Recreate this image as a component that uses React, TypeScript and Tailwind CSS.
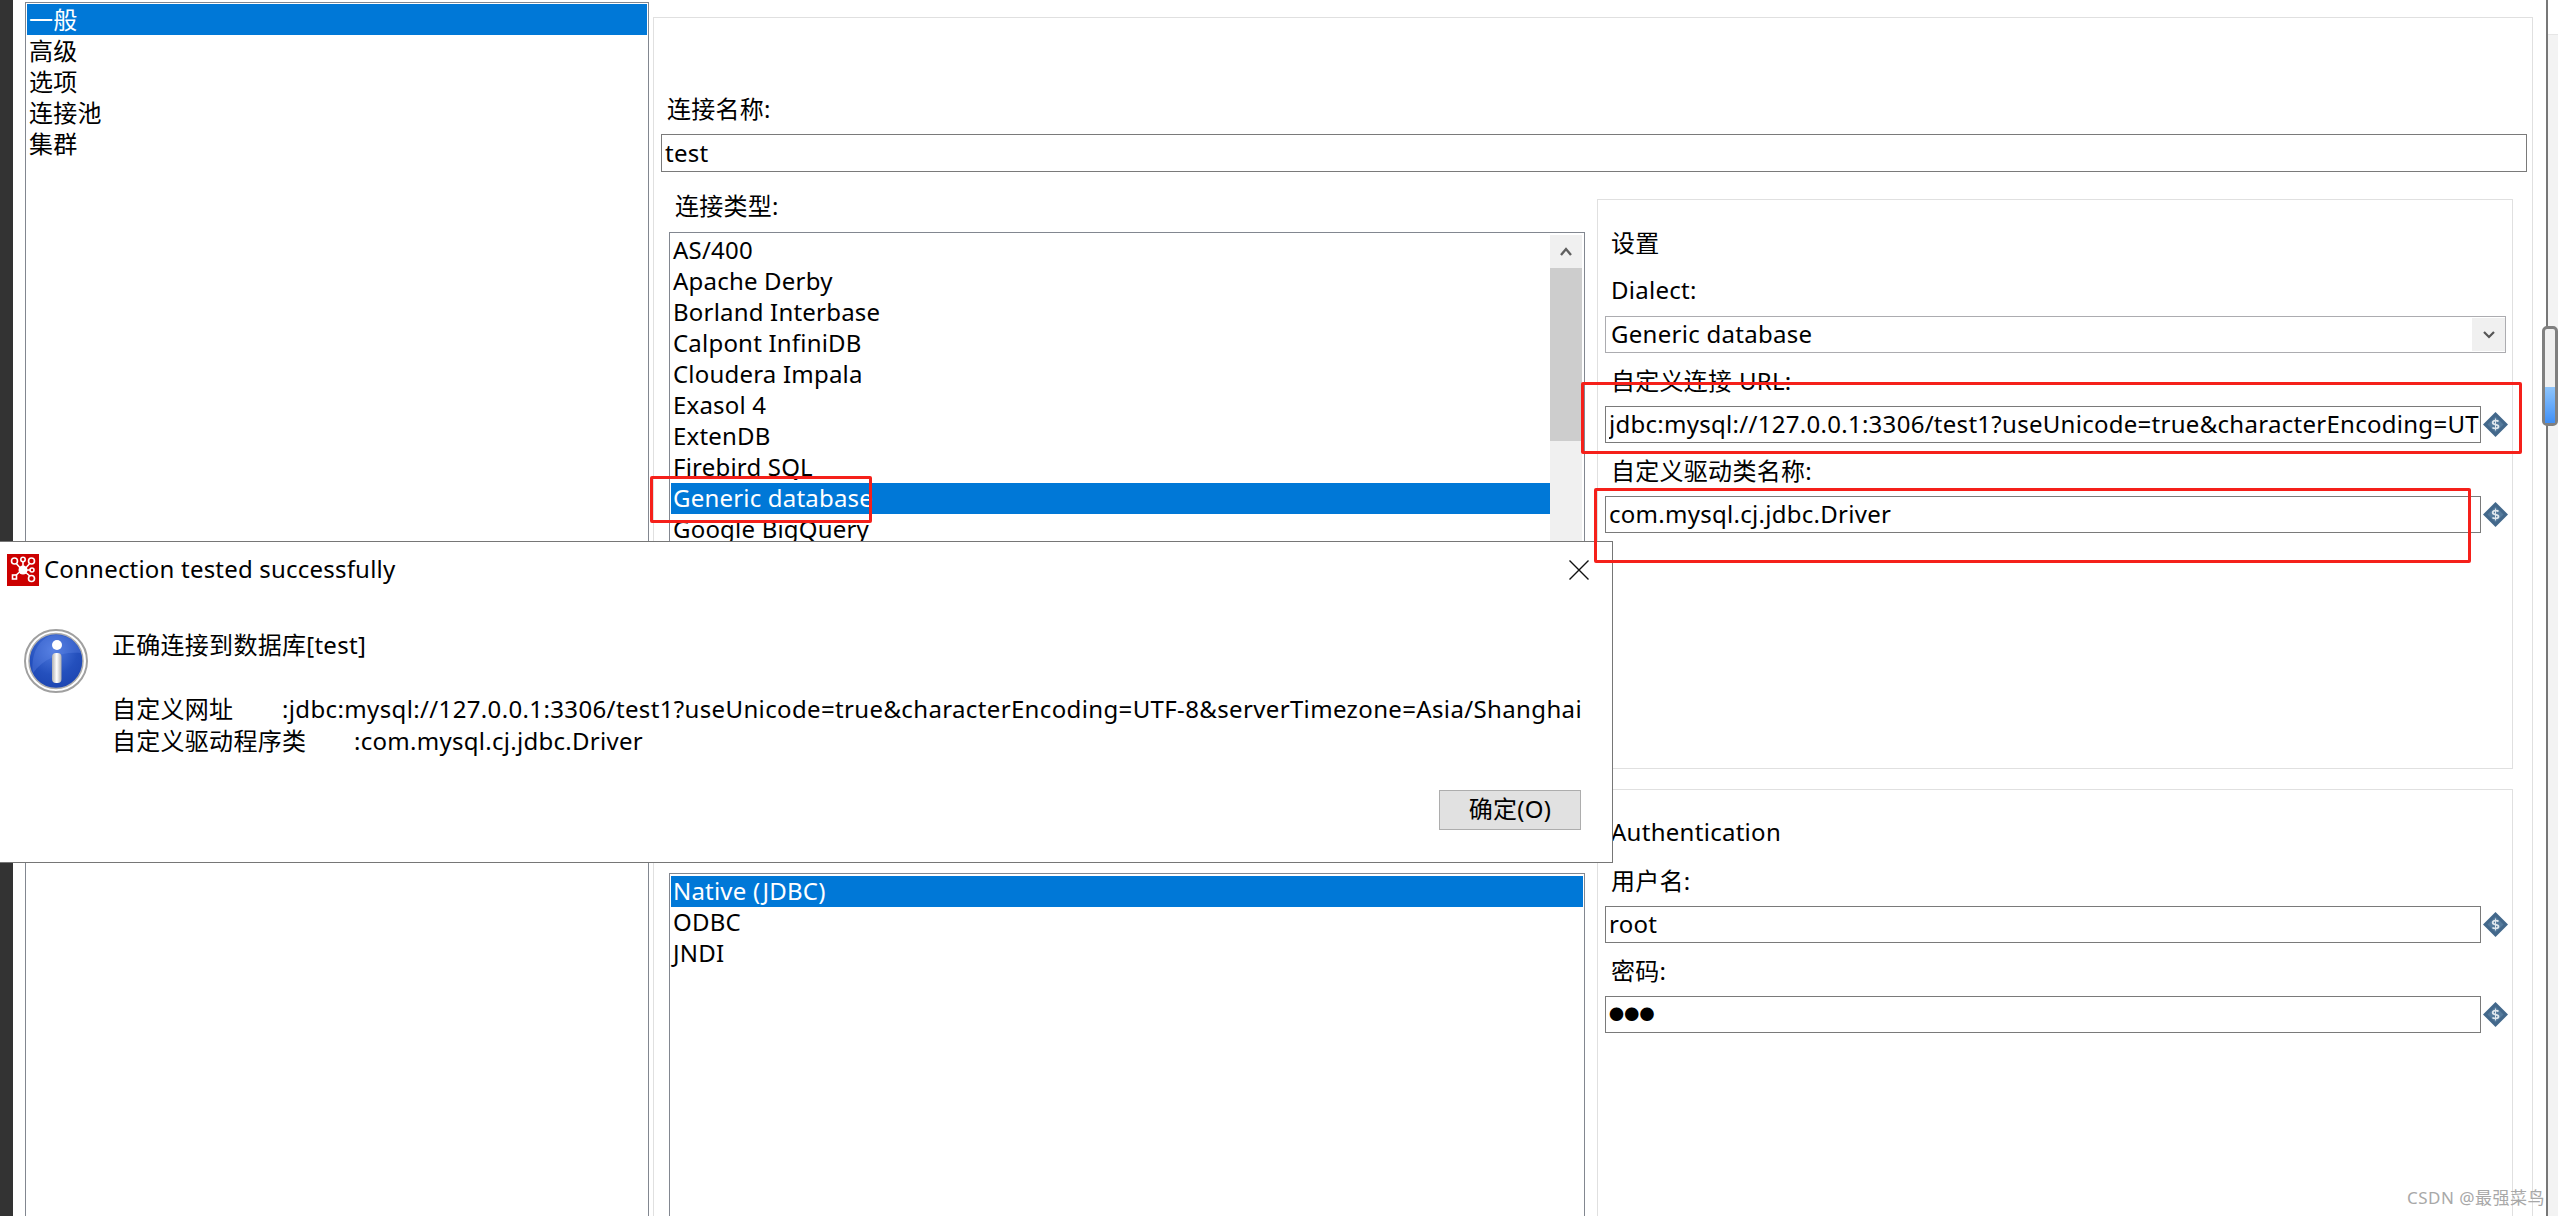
import React from 'react';

const DRIVERS = [
  'AS/400',
  'Apache Derby',
  'Borland Interbase',
  'Calpont InfiniDB',
  'Cloudera Impala',
  'Exasol 4',
  'ExtenDB',
  'Firebird SQL',
  'Generic database',
  'Google BigQuery',
];

const VarIcon: React.FC = () => (
  <svg viewBox="0 0 25 25" className="ml-[2px] h-[25px] w-[25px] shrink-0">
    <path d="M12.5 0 25 12.5 12.5 25 0 12.5Z" fill="#43688b" />
    <path d="M12.5 4.5 20.5 12.5 12.5 20.5 4.5 12.5Z" fill="#557a9c" />
    <path d="M15.5 9.5c-1-1.2-5.8-1.4-5.8 1.2 0 2.6 5.8 1.2 5.8 3.8 0 2.5-5 2.2-6 1" fill="none" stroke="#dfe7ee" strokeWidth="1.8" />
    <path d="M12.5 6.5v12" stroke="#dfe7ee" strokeWidth="1" />
  </svg>
);

const Field: React.FC<{ value: string; label: string; first?: boolean; dots?: boolean }> = ({ value, label, first, dots }) => (
  <>
    <div className={`${first ? 'mt-[18px]' : 'mt-[13px]'} h-[31px] pl-[13px] leading-[29px]`}>{label}</div>
    <div className="ml-[7px] mt-[9px] flex items-center">
      <input
        readOnly
        value={value}
        className={`h-[37px] w-[876px] shrink-0 border border-[#7a7a7a] bg-white pb-[2px] pl-[3px] text-black outline-none ${dots ? 'text-[15px]' : 'text-[24px]'}`}
      />
      <VarIcon />
    </div>
  </>
);

const ListRow: React.FC<{ text: string; selected?: boolean; tree?: boolean }> = ({ text, selected, tree }) => (
  <div
    className={`h-[31px] whitespace-nowrap pl-[2px] ${tree ? 'leading-[31px]' : 'leading-[30px] tracking-[0.2px]'} ${
      selected ? 'bg-[#0078d7] text-white' : 'text-black'
    }`}
  >
    {text}
  </div>
);

const InfoIcon: React.FC = () => (
  <svg viewBox="0 0 64 64" className="h-[64px] w-[64px] shrink-0">
    <defs>
      <radialGradient id="disc" cx="45%" cy="30%" r="75%">
        <stop offset="0" stopColor="#4f7be0" />
        <stop offset="0.6" stopColor="#2450bd" />
        <stop offset="1" stopColor="#1c44b0" />
      </radialGradient>
      <linearGradient id="stem" x1="0" x2="1" y1="0" y2="0">
        <stop offset="0" stopColor="#b0b0b0" />
        <stop offset="0.5" stopColor="#ffffff" />
        <stop offset="1" stopColor="#b0b0b0" />
      </linearGradient>
    </defs>
    <ellipse cx="32" cy="32" rx="31" ry="31" fill="#fff" stroke="#a0a0a0" strokeWidth="2" />
    <ellipse cx="32" cy="32" rx="27" ry="27.5" fill="url(#disc)" stroke="#adadad" strokeWidth="1.5" />
    <path d="M9 44C20 28 40 22 57 24 53 12 43 6 32 6 18 6 6 22 9 44Z" fill="#6a90ea" opacity="0.3" />
    <circle cx="33" cy="16" r="5" fill="#fff" />
    <rect x="28" y="24" width="9.5" height="30" rx="4" fill="url(#stem)" />
  </svg>
);

const AppIcon: React.FC = () => (
  <svg viewBox="0 0 32 32" className="h-[32px] w-[32px] shrink-0">
    <rect width="32" height="32" fill="#cc0000" />
    <g stroke="#fff" strokeWidth="1.6" fill="none">
      <path d="M15 16 8 8M16 16V7M17 16l7-8M17 16h6M15 16 8 22M17 17l7 6" />
      <circle cx="7.5" cy="7" r="3" fill="#cc0000" />
      <circle cx="16" cy="5.5" r="2.2" fill="#cc0000" />
      <circle cx="24.5" cy="7" r="3" fill="#cc0000" />
      <circle cx="25" cy="16" r="2" fill="#cc0000" />
      <rect x="5.5" y="21" width="4" height="4" fill="#cc0000" />
      <circle cx="24.5" cy="24.5" r="3" fill="#cc0000" />
    </g>
    <circle cx="16" cy="16" r="4.5" fill="#fff" />
  </svg>
);

const App: React.FC = () => {
  return (
    <div className='relative flex h-[1216px] w-[2558px] overflow-hidden bg-white text-[24px] tracking-[0.28px] text-black [font-family:"Noto_Sans","Noto_Sans_CJK_SC",sans-serif]'>
      {/* window edge on the left */}
      <div className="w-[13px] shrink-0 bg-[#333333]" />

      {/* page tree */}
      <div className="ml-[12px] mt-[2px] h-[1300px] w-[624px] shrink-0 border border-[#828790] p-[1px]">
        <ListRow tree text="一般" selected />
        <ListRow tree text="高级" />
        <ListRow tree text="选项" />
        <ListRow tree text="连接池" />
        <ListRow tree text="集群" />
      </div>

      {/* general page */}
      <div className="ml-[4px] mt-[17px] h-[1300px] w-[1880px] shrink-0 border border-[#e0e0e0]">
        <div className="mt-[76px] h-[31px] pl-[13px] leading-[29px]">连接名称:</div>
        <input
          readOnly
          value="test"
          className="ml-[7px] mt-[9px] block h-[38px] w-[1866px] border border-[#7a7a7a] pb-[2px] pl-[3px] text-[24px] outline-none"
        />

        <div className="mt-[19px] flex">
          <div className="ml-[15px] w-[916px] shrink-0">
            <div className="h-[31px] pl-[6px] leading-[29px]">连接类型:</div>
            <div className="mt-[10px] flex h-[621px] overflow-hidden border border-[#828790] p-[1px] pr-[2px] pt-[2px]">
              <div className="min-w-0 flex-1">
                {DRIVERS.map((d) => (
                  <ListRow key={d} text={d} selected={d === 'Generic database'} />
                ))}
              </div>
              <div className="flex w-[32px] shrink-0 flex-col bg-[#f0f0f0]">
                <div className="flex h-[33px] shrink-0 items-center justify-center">
                  <svg viewBox="0 0 12 9" className="h-[9px] w-[12px]">
                    <path d="M1 8l5-6 5 6" fill="none" stroke="#606060" strokeWidth="2.4" />
                  </svg>
                </div>
                <div className="h-[173px] shrink-0 bg-[#cdcdcd]" />
              </div>
            </div>
            <div className="mt-[20px] h-[400px] border border-[#828790] p-[1px] pt-[2px]">
              <ListRow text="Native (JDBC)" selected />
              <ListRow text="ODBC" />
              <ListRow text="JNDI" />
            </div>
          </div>

          <div className="ml-[12px] mt-[8px] w-[916px] shrink-0">
            <div className="h-[570px] border border-[#e0e0e0]">
              <div className="mt-[28px] h-[31px] pl-[13px] leading-[29px]">设置</div>
              <div className="mt-[16px] h-[31px] pl-[13px] leading-[29px]">Dialect:</div>
              <div className="ml-[7px] mt-[10px] flex h-[37px] w-[901px] items-center border border-[#acacb0] pl-[3px]">
                <span className="-mt-[2px] flex-1 pl-[2px]">Generic database</span>
                <span className="flex h-[33px] w-[33px] items-center justify-center bg-[#f0f0f0]">
                  <svg viewBox="0 0 12 8" className="h-[8px] w-[12px]">
                    <path d="M1 1l5 5 5-5" fill="none" stroke="#555555" strokeWidth="2.2" />
                  </svg>
                </span>
              </div>
              <Field
                label="自定义连接 URL:"
                value="jdbc:mysql://127.0.0.1:3306/test1?useUnicode=true&characterEncoding=UTF-8&serverTimezone=Asia/Shanghai"
              />
              <Field label="自定义驱动类名称:" value="com.mysql.cj.jdbc.Driver" />
            </div>
            <div className="mt-[20px] h-[500px] border border-[#e0e0e0]">
              <div className="mt-[27px] h-[31px] pl-[13px] leading-[29px]">Authentication</div>
              <Field first label="用户名:" value="root" />
              <Field dots label="密码:" value="●●●" />
            </div>
          </div>
        </div>
      </div>

      {/* outer scroll gutter */}
      <div className="ml-[13px] flex flex-1 flex-col items-end border-l-2 border-[#777777] bg-[#f3f3f3]">
        <div className="h-[35px] w-full shrink-0 border-b border-[#e6e6e6] bg-white" />
      </div>
      <div className="absolute left-[2542px] top-[326px] flex h-[100px] w-[16px] flex-col justify-end rounded-[5px] border-[3px] border-[#808080] bg-[#f0f0f0]">
        <div className="h-[36px] bg-gradient-to-b from-[#8ec5fc] to-[#3f8ff5]" />
      </div>

      {/* message dialog */}
      <div className="absolute left-0 top-[541px] flex h-[322px] w-[1613px] flex-col border-y border-r border-[#767676] bg-white">
        <div className="mt-[12px] flex h-[32px] items-center pl-[7px] pr-[23px]">
          <AppIcon />
          <span className="-mt-[2px] ml-[5px] flex-1 tracking-[0.2px]">Connection tested successfully</span>
          <svg viewBox="0 0 20 20" className="h-[20px] w-[20px]">
            <path d="M0.5 0.5 19.5 19.5M19.5 0.5 0.5 19.5" stroke="#111" strokeWidth="1.4" />
          </svg>
        </div>
        <div className="ml-[24px] mt-[43px] flex">
          <InfoIcon />
          <div className="ml-[24px] whitespace-nowrap leading-[32px]">
            <div>正确连接到数据库[test]</div>
            <div className="mt-[32px] flex">
              <span className="w-[170px]">自定义网址</span>
              <span className="tracking-[0.36px]">:jdbc:mysql://127.0.0.1:3306/test1?useUnicode=true&amp;characterEncoding=UTF-8&amp;serverTimezone=Asia/Shanghai</span>
            </div>
            <div className="flex">
              <span className="w-[242px]">自定义驱动程序类</span>
              <span>:com.mysql.cj.jdbc.Driver</span>
            </div>
          </div>
        </div>
        <div className="mb-[32px] mt-auto flex justify-end pr-[31px]">
          <button className="h-[40px] w-[142px] border border-[#adadad] bg-[#e1e1e1] pb-[2px] text-[24px]">确定(O)</button>
        </div>
      </div>

      {/* annotations drawn on the screenshot */}
      <div className="absolute left-[650px] top-[476px] h-[47px] w-[222px] rounded-[2px] border-[3px] border-[#f5201a]" />
      <div className="absolute left-[1581px] top-[382px] h-[72px] w-[941px] rounded-[2px] border-[3px] border-[#f5201a]" />
      <div className="absolute left-[1594px] top-[488px] h-[75px] w-[877px] rounded-[2px] border-[3px] border-[#f5201a]" />

      <div className="absolute left-[2407px] top-[1186px] whitespace-nowrap text-[17px] leading-[24px] tracking-[0.5px] text-[#a8a8a8]">
        CSDN @最强菜鸟
      </div>
    </div>
  );
};

export default App;
